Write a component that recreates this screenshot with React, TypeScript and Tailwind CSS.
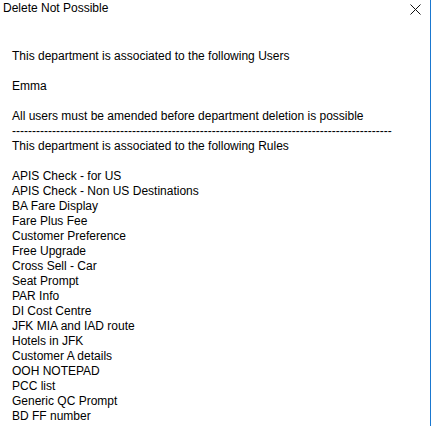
const rules = [
  'APIS Check - for US',
  'APIS Check - Non US Destinations',
  'BA Fare Display',
  'Fare Plus Fee',
  'Customer Preference',
  'Free Upgrade',
  'Cross Sell - Car',
  'Seat Prompt',
  'PAR Info',
  'DI Cost Centre',
  'JFK MIA and IAD route',
  'Hotels in JFK',
  'Customer A details',
  'OOH NOTEPAD',
  'PCC list',
  'Generic QC Prompt',
  'BD FF number',
];

function App() {
  return (
    <div className="w-[432px] h-[426px] bg-white flex overflow-hidden text-black font-['Liberation_Sans',Arial,sans-serif] text-[12px] leading-[15px]">
      <div className="flex-1 flex flex-col">
        <div className="flex items-start justify-between h-[16px] pl-[3px] pt-[1px]">
          <span>Delete Not Possible</span>
          <button className="mt-[3px] mr-[9px]">
            <svg width="11" height="11" viewBox="0 0 11 11" fill="none" stroke="#111" strokeWidth="1">
              <path d="M0.5 0.5 L10.5 10.5 M10.5 0.5 L0.5 10.5" />
            </svg>
          </button>
        </div>
        <div className="pl-[12px] pt-[33px] flex flex-col">
          <p>This department is associated to the following Users</p>
          <p className="h-[15px]" />
          <p>Emma</p>
          <p className="h-[15px]" />
          <p>All users must be amended before department deletion is possible</p>
          <p className="whitespace-nowrap">{'-'.repeat(95)}</p>
          <p>This department is associated to the following Rules</p>
          <p className="h-[15px]" />
          {rules.map((r) => (
            <p key={r}>{r}</p>
          ))}
        </div>
      </div>
      <div className="w-px h-full bg-[#1a78d0] mr-[1px]" />
    </div>
  );
}

export default App;
